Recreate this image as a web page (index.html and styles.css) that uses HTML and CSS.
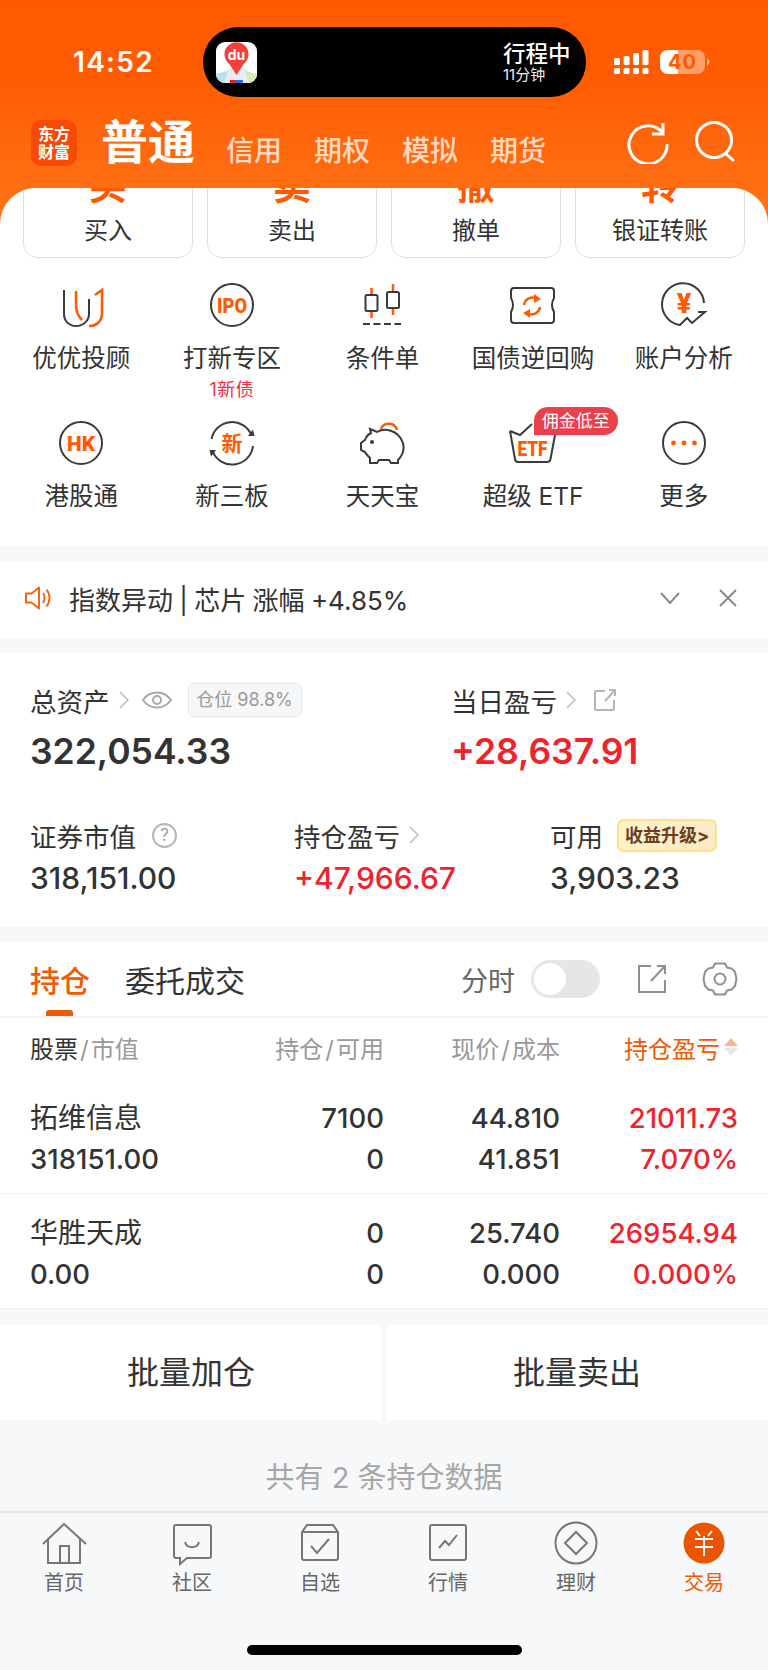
FILE: index.html
```html
<!DOCTYPE html>
<html lang="zh-CN">
<head>
<meta charset="utf-8">
<title>交易</title>
<link rel="stylesheet" href="styles.css">
</head>
<body>
<div class="page">
  <div class="top">
    <div class="status">
      <span class="time">14:52</span>
      <div class="island">
        <svg class="app-icon" viewBox="0 0 41 41">
          <rect width="41" height="41" rx="9" fill="#fff"/>
          <path d="M0 34L14 26H27L41 34V32A9 9 0 0 1 32 41H9A9 9 0 0 1 0 32Z" fill="#e6eef2"/>
          <path d="M0 32L12 29L8 41H9A9 9 0 0 1 0 32Z" fill="#b5dff2"/>
          <path d="M41 32L29 29L33 41H32A9 9 0 0 0 41 32Z" fill="#d5ebb0"/>
          <rect x="14" y="38" width="6" height="3" fill="#d8232a"/>
          <rect x="20" y="38" width="7" height="3" fill="#2d6fd8"/>
          <path d="M20.5 33L13 21.5A12 12 0 1 1 28 21.5Z" fill="#f2403a"/>
          <text x="20.5" y="18" class="du">du</text>
        </svg>
        <div class="trip">
          <span class="trip-title">行程中</span>
          <span class="trip-sub">11分钟</span>
        </div>
      </div>
      <svg class="signal" viewBox="0 0 35 24" width="35" height="24" fill="#fff">
        <rect x="0" y="8" width="6" height="7" rx="1.5"/><rect x="0" y="18" width="6" height="6" rx="1.5"/>
        <rect x="9.5" y="6" width="6" height="9" rx="1.5"/><rect x="9.5" y="18" width="6" height="6" rx="1.5"/>
        <rect x="19" y="3" width="6" height="12" rx="1.5"/><rect x="19" y="18" width="6" height="6" rx="1.5"/>
        <rect x="28.5" y="0" width="6" height="15" rx="1.5"/><rect x="28.5" y="18" width="6" height="6" rx="1.5"/>
      </svg>
      <div class="battery"><span class="battery-fill"></span><span class="battery-num">40</span><span class="battery-nub"></span></div>
    </div>

    <div class="nav">
      <div class="logo"><span>东方</span><span>财富</span></div>
      <span class="nav-main">普通</span>
      <div class="nav-items">
        <span>信用</span><span>期权</span><span>模拟</span><span>期货</span>
      </div>
      <div class="nav-tools">
        <svg viewBox="0 0 44 44" width="44" height="44" fill="none" stroke="#fff" stroke-width="3">
          <path d="M36 12A19 19 0 1 0 41 24"/>
          <path d="M37 3V14H26"/>
        </svg>
        <svg viewBox="0 0 44 44" width="44" height="44" fill="none" stroke="#fff" stroke-width="3">
          <circle cx="22" cy="20" r="17.5"/>
          <path d="M33 33L42 41"/>
        </svg>
      </div>
    </div>

    <div class="sheet">
      <div class="quick">
        <div class="quick-btn"><span class="quick-big">买</span><span class="quick-text">买入</span></div>
        <div class="quick-btn"><span class="quick-big">卖</span><span class="quick-text">卖出</span></div>
        <div class="quick-btn"><span class="quick-big">撤</span><span class="quick-text">撤单</span></div>
        <div class="quick-btn"><span class="quick-big">转</span><span class="quick-text">银证转账</span></div>
      </div>
      <div class="grid">
        <div class="cell">
          <svg class="ico" viewBox="0 0 48 48">
            <path class="dk" d="M7 9V33C7 40 12 45 19 45C26 45 32 40 32 33V18"/>
            <path class="or" d="M19 10V24C19 30 21 35 25 39"/>
            <path class="or" d="M32 45C40 45 45 40 45 32V9L38 14"/>
          </svg>
          <span class="cell-label">优优投顾</span>
        </div>
        <div class="cell">
          <svg class="ico" viewBox="0 0 48 48">
            <circle class="dk" cx="24" cy="24" r="21"/>
            <text x="24" y="31.5" class="ico-text" textLength="30" lengthAdjust="spacingAndGlyphs">IPO</text>
          </svg>
          <span class="cell-label">打新专区</span>
          <span class="cell-sub">1新债</span>
        </div>
        <div class="cell">
          <svg class="ico" viewBox="0 0 48 48">
            <path class="or" d="M13.5 7V37M35 3V34"/>
            <rect class="dk fill-w" x="7.5" y="14" width="12" height="16" rx="1.5"/>
            <rect class="dk fill-w" x="29" y="11" width="12" height="16" rx="1.5"/>
            <path class="dk" d="M5 43H43" stroke-dasharray="7 3.5"/>
          </svg>
          <span class="cell-label">条件单</span>
        </div>
        <div class="cell">
          <svg class="ico" viewBox="0 0 48 48">
            <path class="dk" d="M5 7H42Q45 7 45 10V17Q41 24 45 31V39Q45 42 42 42H5Q2 42 2 39V31Q6 24 2 17V10Q2 7 5 7Z"/>
            <path class="or" d="M15 24A8.500 8.500 0 0 1 28 18"/>
            <path class="or" d="M31 26A8.500 8.500 0 0 1 18 32"/>
            <path class="or-f" d="M25 13L32 18L25 22ZM21 37L14 32L21 28Z"/>
          </svg>
          <span class="cell-label">国债逆回购</span>
        </div>
        <div class="cell">
          <svg class="ico" viewBox="0 0 48 48">
            <path class="dk" d="M44 22A21 21 0 1 0 20 44L27 37L32 42L45 31H38"/>
            <text x="24" y="32" class="ico-text yen">¥</text>
          </svg>
          <span class="cell-label">账户分析</span>
        </div>
        <div class="cell">
          <svg class="ico" viewBox="0 0 48 48">
            <circle class="dk" cx="24" cy="24" r="21"/>
            <text x="24" y="31.5" class="ico-text" textLength="28" lengthAdjust="spacingAndGlyphs">HK</text>
          </svg>
          <span class="cell-label">港股通</span>
        </div>
        <div class="cell">
          <svg class="ico" viewBox="0 0 48 48">
            <path class="dk" d="M3.5 20A21 21 0 0 1 43.5 16"/>
            <path class="dk" d="M45 27A21 21 0 0 1 4.500 32"/>
            <path class="dk-f" d="M40 17L46.500 17L45 10.500ZM8 31L1.500 31L3 37.500Z"/>
            <text x="24" y="31.5" class="ico-text cjk">新</text>
          </svg>
          <span class="cell-label">新三板</span>
        </div>
        <div class="cell">
          <svg class="ico" viewBox="0 0 48 48">
            <path class="or" d="M23 10A8.500 8.500 0 0 1 39 11"/>
            <path class="dk" d="M12 10L19 13C26 9 40 10 45 24C47 32 43 38 40 41V44H33L31 41H21L19 44H12V39C10 37 8 35 7 33L3 31V24L7 21C8 18 11 15 13 14Z"/>
            <circle class="dk-f" cx="14" cy="23" r="2"/>
          </svg>
          <span class="cell-label">天天宝</span>
        </div>
        <div class="cell">
          <svg class="ico" viewBox="0 0 48 48">
            <path class="dk" d="M1 12L11 16L23 5M46 16L41.500 40Q41 43 38 43H9Q6.500 43 6 40L1 12"/>
            <text x="23.500" y="36.500" class="ico-text etf" textLength="30" lengthAdjust="spacingAndGlyphs">ETF</text>
          </svg>
          <span class="cell-label">超级 ETF</span>
          <span class="promo">佣金低至</span>
        </div>
        <div class="cell">
          <svg class="ico" viewBox="0 0 48 48">
            <circle class="dk" cx="24" cy="24" r="21"/>
            <circle class="or-f" cx="13.500" cy="24" r="2.400"/><circle class="or-f" cx="24" cy="24" r="2.400"/><circle class="or-f" cx="34.500" cy="24" r="2.400"/>
          </svg>
          <span class="cell-label">更多</span>
        </div>
      </div>
    </div>
  </div>

  <div class="notice">
    <svg class="speaker" viewBox="0 0 28 28" width="28" height="28" fill="none" stroke="#f5640f" stroke-width="2">
      <path d="M2 9.500H7.500L15 3.500V24.500L7.500 18.500H2Z" stroke-linejoin="round"/>
      <path d="M19 9C21 11.500 21 16.500 19 19M22.500 5.500C26.500 10.500 26.500 17.500 22.500 22.500"/>
    </svg>
    <span class="notice-text">指数异动 | 芯片 涨幅 +4.85%</span>
    <svg class="notice-ico chevron" viewBox="0 0 20 12" width="20" height="12" fill="none" stroke="#8a8a8a" stroke-width="2"><path d="M1 1L10 11L19 1"/></svg>
    <svg class="notice-ico" viewBox="0 0 20 18" width="20" height="18" fill="none" stroke="#8a8a8a" stroke-width="2"><path d="M2 1L18 17M18 1L2 17"/></svg>
  </div>

  <div class="assets">
    <div class="assets-top">
      <div class="asset">
        <div class="asset-label">
          <span>总资产</span>
          <svg class="arr" viewBox="0 0 10 20" width="10" height="20"><path d="M1 2L9 10L1 18"/></svg>
          <svg class="eye" viewBox="0 0 30 20" width="30" height="20" fill="none" stroke="#a8a8a8" stroke-width="2"><path d="M1 10C8 0 22 0 29 10C22 20 8 20 1 10Z"/><circle cx="15" cy="10" r="4"/></svg>
          <span class="pos">仓位 98.8%</span>
        </div>
        <div class="big-num">322,054.33</div>
      </div>
      <div class="asset">
        <div class="asset-label">
          <span>当日盈亏</span>
          <svg class="arr" viewBox="0 0 10 20" width="10" height="20"><path d="M1 2L9 10L1 18"/></svg>
          <svg class="share" viewBox="0 0 24 24" width="24" height="24" fill="none" stroke="#b5b5b5" stroke-width="2"><path d="M12 3H3Q2 3 2 4V21Q2 22 3 22H20Q21 22 21 21V12"/><path d="M12 13L22 2M16 2H22V8"/></svg>
        </div>
        <div class="big-num red">+28,637.91</div>
      </div>
    </div>
    <div class="assets-bottom">
      <div class="asset">
        <div class="asset-label">
          <span>证券市值</span>
          <span class="q">?</span>
        </div>
        <div class="mid-num">318,151.00</div>
      </div>
      <div class="asset">
        <div class="asset-label">
          <span>持仓盈亏</span>
          <svg class="arr" viewBox="0 0 10 20" width="10" height="20"><path d="M1 2L9 10L1 18"/></svg>
        </div>
        <div class="mid-num red">+47,966.67</div>
      </div>
      <div class="asset">
        <div class="asset-label">
          <span>可用</span>
          <span class="upgrade">收益升级&gt;</span>
        </div>
        <div class="mid-num">3,903.23</div>
      </div>
    </div>
  </div>

  <div class="holdings">
    <div class="tabs">
      <span class="tab active">持仓</span>
      <span class="tab">委托成交</span>
      <span class="tab-tools">
        <span class="fen">分时</span>
        <span class="toggle"><span class="knob"></span></span>
        <svg class="tool-share" viewBox="0 0 30 30" width="30" height="30" fill="none" stroke="#8f8f8f" stroke-width="2"><path d="M14 2H2V28H28V16"/><path d="M14 17L28 2M20 2H28V10"/></svg>
        <svg class="tool-gear" viewBox="0 0 36 36" width="36" height="36" fill="none" stroke="#8f8f8f" stroke-width="2"><path d="M13 2.500H23L25 6.500L29.500 7.500L33 11L34.500 18L33 25L29.500 28.500L25 29.500L23 33.500H13L11 29.500L6.500 28.500L3 25L1.500 18L3 11L6.500 7.500L11 6.500Z" stroke-linejoin="round"/><circle cx="18" cy="18" r="5.500"/></svg>
      </span>
    </div>
    <div class="thead">
      <span class="c1"><b>股票</b><i class="sl">/</i>市值</span>
      <span class="c2">持仓<i class="sl">/</i>可用</span>
      <span class="c3">现价<i class="sl">/</i>成本</span>
      <span class="c4 sort">持仓盈亏<i class="tri"><i class="tri-up"></i><i class="tri-down"></i></i></span>
    </div>
    <div class="trow">
      <div class="c1"><span class="name">拓维信息</span><span>318151.00</span></div>
      <div class="c2"><span>7100</span><span>0</span></div>
      <div class="c3"><span>44.810</span><span>41.851</span></div>
      <div class="c4 red"><span>21011.73</span><span>7.070%</span></div>
    </div>
    <div class="trow">
      <div class="c1"><span class="name">华胜天成</span><span>0.00</span></div>
      <div class="c2"><span>0</span><span>0</span></div>
      <div class="c3"><span>25.740</span><span>0.000</span></div>
      <div class="c4 red"><span>26954.94</span><span>0.000%</span></div>
    </div>
  </div>

  <div class="batch">
    <span class="batch-btn">批量加仓</span>
    <span class="batch-btn">批量卖出</span>
  </div>
  <div class="count">共有 2 条持仓数据</div>

  <div class="tabbar">
    <div class="tb">
      <svg class="tb-ico" viewBox="0 0 48 48"><path d="M3 25L24 5L46 25M8 20V44H40V20M20 44V27H29V44"/></svg>
      <span>首页</span>
    </div>
    <div class="tb">
      <svg class="tb-ico" viewBox="0 0 48 48"><path d="M8 6H41Q43 6 43 8V37Q43 39 41 39H19L12 45V39H8Q6 39 6 37V8Q6 6 8 6Z"/><path d="M17 23C19 30 29 30 31 23"/></svg>
      <span>社区</span>
    </div>
    <div class="tb">
      <svg class="tb-ico" viewBox="0 0 48 48"><path d="M11 6H37L42 13V39Q42 41 40 41H8Q6 41 6 39V13ZM6 13H42"/><path d="M15 27L21 34L33 20"/></svg>
      <span>自选</span>
    </div>
    <div class="tb">
      <svg class="tb-ico" viewBox="0 0 48 48"><rect x="6" y="6" width="36" height="35" rx="2"/><path d="M15 29L21 22L25 26L33 16"/></svg>
      <span>行情</span>
    </div>
    <div class="tb">
      <svg class="tb-ico" viewBox="0 0 48 48"><circle cx="24" cy="24" r="20.500"/><path d="M24 13L35 24L24 35L13 24Z"/></svg>
      <span>理财</span>
    </div>
    <div class="tb tb-on">
      <svg class="tb-ico" viewBox="0 0 48 48"><circle class="tb-disc" cx="24" cy="24" r="20.500"/><path class="tb-yen" d="M16 12L20 17M32 12L28 17M15 20H33M15 28H33M24 17V37"/></svg>
      <span>交易</span>
    </div>
  </div>
  <div class="home-wrap"><span class="home-bar"></span></div>
</div>
</body>
</html>
```

FILE: styles.css
```css
* { box-sizing: border-box; }
html, body { margin: 0; padding: 0; }
body {
  width: 768px;
  height: 1670px;
  overflow: hidden;
  background: #f7f8fa;
  font-family: "Inter", "Noto Sans CJK SC", sans-serif;
  color: #333;
}
.page { width: 768px; height: 1670px; overflow: hidden; }

/* top */
.top {
  background: linear-gradient(180deg, #ff5a00 0, #ff5b01 70px, #ff7519 226px);
  padding-top: 27px;
}
.status { display: flex; align-items: center; height: 70px; padding-left: 73px; }
.time { width: 130px; color: #fff; font-size: 28px; font-weight: 600; letter-spacing: 1.300px; }
.island {
  width: 383px; height: 70px; background: #000; border-radius: 35px;
  display: flex; align-items: center; justify-content: space-between;
  padding: 0 17px 0 13px;
}
.app-icon { width: 41px; height: 41px; display: block; }
.du { font: 700 14px "Inter", sans-serif; fill: #fff; text-anchor: middle; }
.trip { display: flex; flex-direction: column; color: #fff; width: 66px; }
.trip-title { font-size: 22.500px; font-weight: 500; line-height: 26px; white-space: nowrap; }
.trip-sub { font-size: 15px; line-height: 16px; color: #eee; white-space: nowrap; }
.signal { margin-left: 28px; }
.battery {
  position: relative; margin-left: 11px; width: 45px; height: 24px; border-radius: 8px;
  background: rgba(255,255,255,.42); overflow: visible;
  display: flex; align-items: center; justify-content: center;
}
.battery-fill { position: absolute; left: 0; top: 0; bottom: 0; width: 18px; background: #fff; border-radius: 8px 0 0 8px; }
.battery-num { position: relative; color: #ff5a00; font-size: 20px; font-weight: 700; letter-spacing: 1px; }
.battery-nub { position: absolute; left: 47px; top: 8px; width: 0; height: 0; border-left: 3px solid rgba(255,255,255,.6); border-top: 4px solid transparent; border-bottom: 4px solid transparent; }

.nav { display: flex; align-items: flex-end; height: 46px; margin-top: 23px; padding: 0 32px 0 31px; }
.logo {
  width: 46px; height: 46px; border-radius: 10px; background: #f64a05; color: #fff;
  display: flex; flex-direction: column; align-items: center; justify-content: center;
  font-size: 16px; font-weight: 700; line-height: 18px;
}
.nav-main { margin-left: 24px; color: #fff; font-size: 47px; font-weight: 700; line-height: 46px; margin-bottom: 1px; }
.nav-items { display: flex; gap: 32px; margin-left: 31px; color: rgba(255,255,255,.76); font-size: 28px; font-weight: 500; line-height: 34px; margin-bottom: -2px; }
.nav-tools { display: flex; gap: 22px; margin-left: auto; margin-bottom: 2px; }

.sheet { height: 358px; margin-top: 22px; background: #fff; border-radius: 36px 36px 0 0; overflow: hidden; }
.quick { display: flex; gap: 14px; padding: 0 23px; margin-top: -30px; }
.quick-btn {
  flex: 1; height: 100px; border: 1.500px solid #dedede; border-radius: 14px; background: #fff;
  display: flex; flex-direction: column; align-items: center; 
}
.quick-big { color: #ff5a00; font-size: 38px; font-weight: 700; line-height: 36px; margin-top: 8px; }
.quick-text { font-size: 24px; line-height: 30px; margin-top: 13px; white-space: nowrap; }

.grid { display: grid; grid-template-columns: repeat(5, 1fr); grid-auto-rows: 138px; padding: 23px 9px 0 6px; }
.cell { position: relative; display: flex; flex-direction: column; align-items: center; }
.ico { width: 48px; height: 48px; display: block; flex: none; }
.dk { fill: none; stroke: #3a3a3a; stroke-width: 2; }
.or { fill: none; stroke: #ff5a00; stroke-width: 2.500; }
.or-f { fill: #ff5a00; }
.dk-f { fill: #3a3a3a; }
.fill-w { fill: #fff; }
.ico-text { font: 900 20px "Roboto", sans-serif; fill: #ff5a00; text-anchor: middle; }
.yen { font-size: 27px; }
.etf { font-size: 21px; }
.cjk { font: 700 21px "Noto Sans CJK SC", sans-serif; }
.cell-label { margin-top: 14px; font-size: 24.500px; line-height: 30px; color: #333; white-space: nowrap; }
.cell-sub { margin-top: 7px; font-size: 18px; line-height: 20px; letter-spacing: .5px; color: #f0303c; white-space: nowrap; }
.promo {
  position: absolute; left: 76px; top: -12px; height: 28px; padding: 0 8px;
  background: #e8414b; color: #fff; font-size: 17px; line-height: 28px;
  border-radius: 14px 14px 14px 0; white-space: nowrap;
}

/* notice */
.notice { display: flex; align-items: center; height: 76px; margin-top: 16px; background: #fff; padding: 0 30px 4px 24px; }
.speaker { flex: none; }
.notice-text { margin-left: 17px; font-size: 26px; color: #333; white-space: nowrap; word-spacing: -1px; }
.chevron { margin-left: auto; margin-right: 38px; }

/* assets */
.assets { margin-top: 15px; height: 274px; background: #fff; padding: 32px 30px 0; }
.assets-top { display: grid; grid-template-columns: 421px 1fr; }
.assets-bottom { display: grid; grid-template-columns: 264px 256px 1fr; margin-top: 46px; }
.asset-label { display: flex; align-items: center; height: 30px; font-size: 26.500px; color: #333; white-space: nowrap; }
.arr { margin-left: 9px; fill: none; stroke: #bbb; stroke-width: 1.500; flex: none; }
.eye { margin-left: 13px; }
.pos {
  margin-left: 16px; width: 114px; height: 34px; line-height: 32px; text-align: center;
  background: #f6f7f8; border: 1px solid #e6e6e6; border-radius: 6px; color: #9a9a9a; font-size: 18px;
}
.share { margin-left: 17px; }
.big-num { margin-top: 15px; font-size: 35.500px; line-height: 44px; font-weight: 600; color: #333; }
.mid-num { margin-top: 9px; font-size: 30px; line-height: 38px; font-weight: 500; color: #333; }
.big-num.red, .mid-num.red, .red { color: #f0232d; }
.q {
  margin-left: 16px; width: 25px; height: 25px; border: 2px solid #b5b5b5; border-radius: 50%;
  color: #999; font-size: 17px; line-height: 21px; text-align: center;
}
.upgrade {
  margin-left: 14px; width: 100px; height: 33px; line-height: 29px; text-align: center;
  border: 2px solid #fbe38a; border-radius: 7px;
  background: linear-gradient(135deg, #fdf2cc, #fbe9c6);
  color: #6b3f1c; font-size: 18px; font-weight: 700;
}

/* holdings */
.holdings { margin-top: 15px; background: #fff; }
.tabs { position: relative; display: flex; align-items: center; height: 76px; padding: 0 30px; border-bottom: 2px solid #f4f4f4; }
.tab { font-size: 30px; color: #333; line-height: 40px; margin-right: 35px; margin-top: 4px; white-space: nowrap; }
.tab.active { position: relative; color: #f05a00; font-weight: 500; }
.tab.active::after { content: ""; position: absolute; left: 16px; top: 49px; width: 27px; height: 6px; background: #f05a00; border-radius: 3px 3px 0 0; }
.tab-tools { display: flex; align-items: center; margin-left: auto; }
.fen { font-size: 27px; color: #666; }
.toggle { margin-left: 16px; width: 69px; height: 38px; border-radius: 19px; background: #e5e6e8; padding: 3px; display: block; }
.knob { display: block; width: 32px; height: 32px; border-radius: 50%; background: #fff; }
.tool-share { margin-left: 37px; }
.tool-gear { margin-left: 35px; }

.thead, .trow { display: grid; grid-template-columns: 176px 178px 176px 178px; padding: 0 30px; }
.thead { height: 61px; padding-bottom: 2px; align-items: center; font-size: 24px; color: #999; white-space: nowrap; }
.thead b { font-weight: 400; color: #333; }
.sl { font-style: normal; margin: 0 2px; }
.c2, .c3, .c4 { text-align: right; }
.sort { position: relative; color: #f05a00; padding-right: 18px; }
.tri { position: absolute; right: 0; top: 8px; width: 14px; display: flex; flex-direction: column; gap: 2px; }
.tri-up { display: block; width: 0; border-left: 7px solid transparent; border-right: 7px solid transparent; border-bottom: 8px solid #fbb48c; }
.tri-down { display: block; width: 0; border-left: 7px solid transparent; border-right: 7px solid transparent; border-top: 8px solid #e6e6e6; }
.trow { height: 115px; padding-top: 19px; border-bottom: 1px solid #f1f1f1; font-size: 27.500px; font-weight: 500; color: #333; }
.trow > div { display: flex; flex-direction: column; }
.trow span { display: block; line-height: 41px; white-space: nowrap; }
.name { font-size: 28px; font-weight: 400; }

.batch { display: flex; gap: 4px; height: 95px; margin-top: 16px; }
.batch-btn { flex: 1; background: #fff; display: flex; align-items: center; justify-content: center; padding-bottom: 6px; font-size: 32px; color: #333; }
.count { height: 91px; padding-top: 36px; line-height: 44px; text-align: center; font-size: 29px; color: #a6a6a6; white-space: nowrap; }

/* tab bar */
.tabbar { display: flex; height: 105px; border-top: 2px solid #e6e7e9; background: #f7f8fa; padding-top: 6px; }
.tb { flex: 1; display: flex; flex-direction: column; align-items: center; font-size: 20px; line-height: 24px; color: #666; }
.tb-ico { width: 48px; height: 48px; margin-bottom: 4px; fill: none; stroke: #777; stroke-width: 2; display: block; }
.tb-on { color: #f05a00; }
.tb-disc { fill: #ec5500; stroke: none; }
.tb-yen { stroke: #fff; stroke-width: 2; }
.home-wrap { display: flex; justify-content: center; padding-top: 29px; }
.home-bar { display: block; width: 275px; height: 10px; background: #000; border-radius: 5px; }
```
